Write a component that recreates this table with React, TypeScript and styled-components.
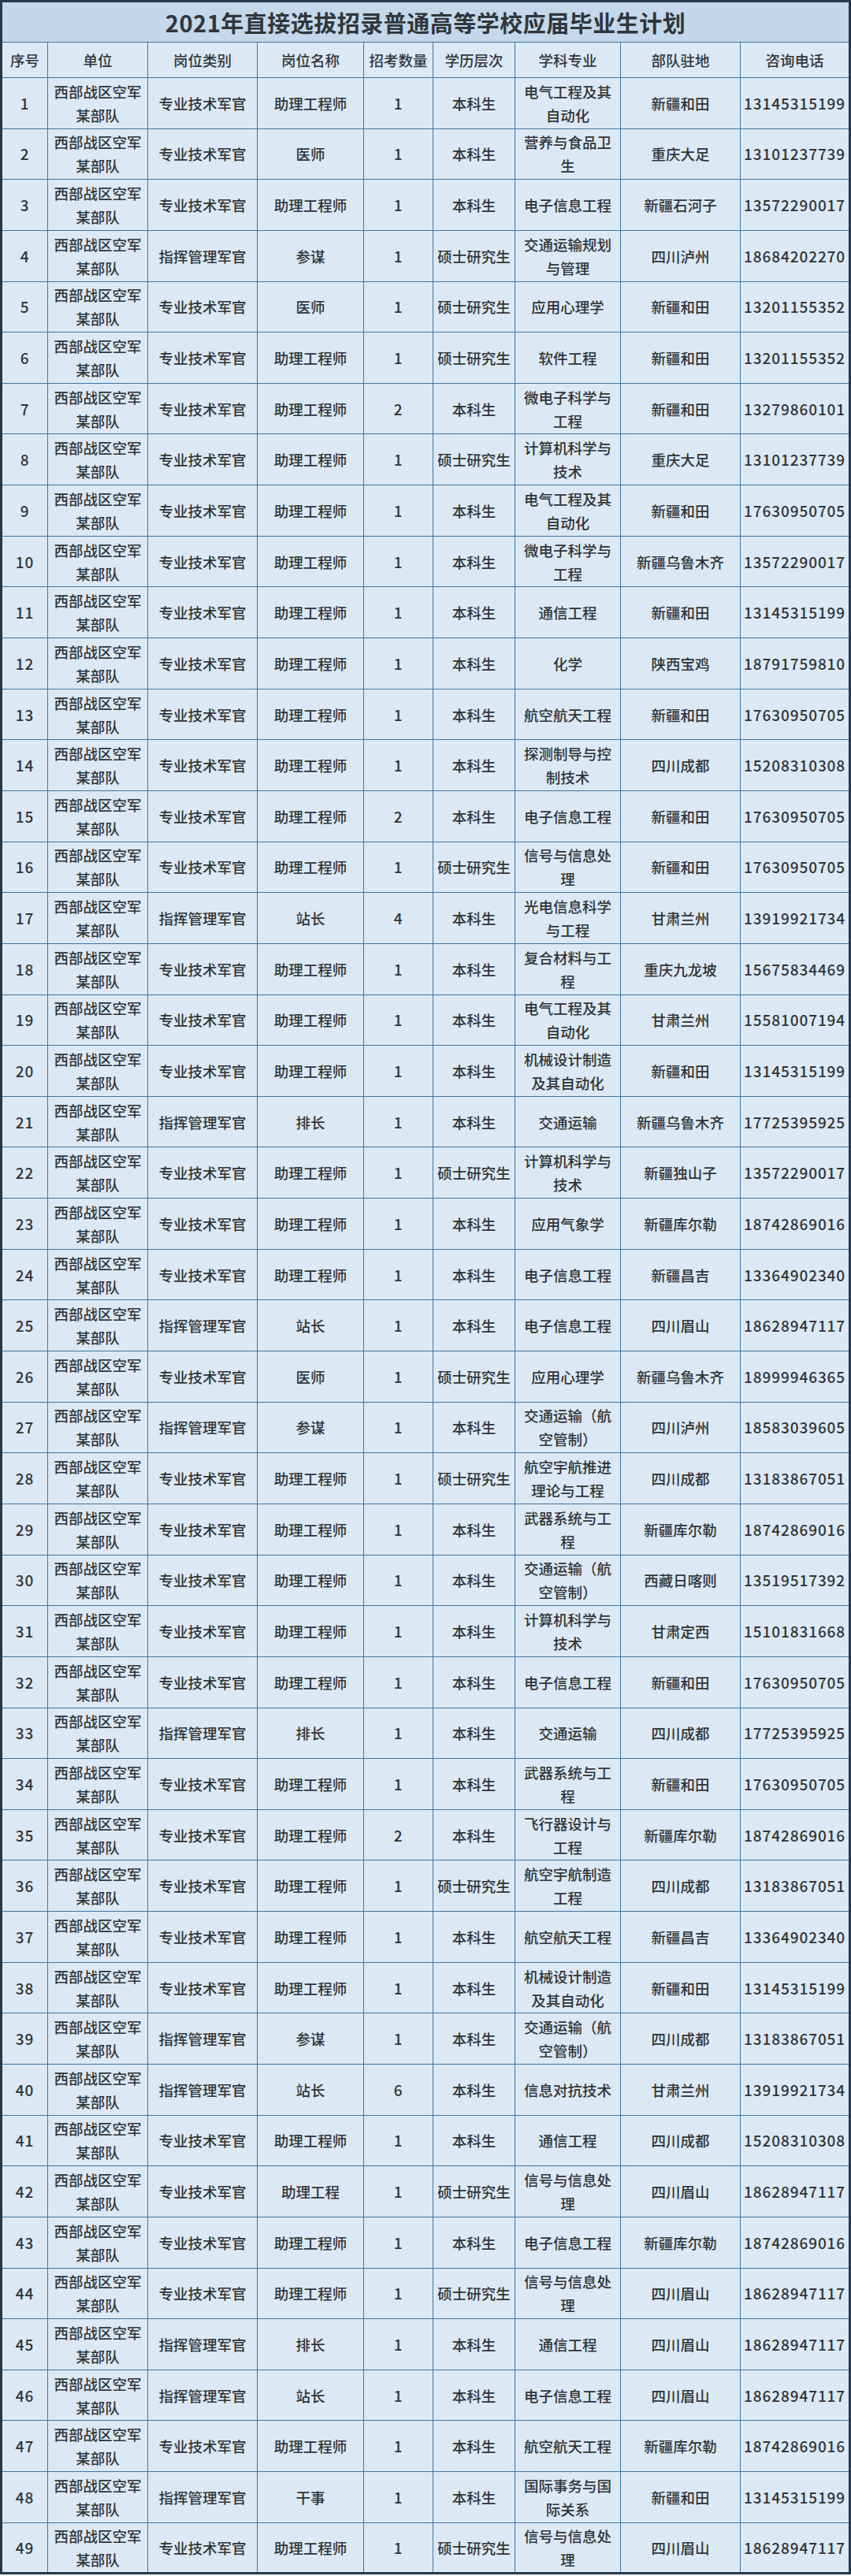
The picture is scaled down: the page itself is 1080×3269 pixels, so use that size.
import React from 'react'
import styled, { createGlobalStyle } from 'styled-components'

const GlobalStyle = createGlobalStyle`
  html, body {
    margin: 0;
    padding: 0;
    background: #ffffff;
  }
  body {
    font-family: "Noto Sans CJK SC", "Noto Sans", sans-serif;
    color: #2f3438;
  }
`

const COLS = [59, 127, 139, 135, 88, 104, 134, 152, 139]
const HEADS = ['序号', '单位', '岗位类别', '岗位名称', '招考数量', '学历层次', '学科专业', '部队驻地', '咨询电话']

const UNIT = '西部战区空军某部队'
const TECH = '专业技术军官'
const CMD = '指挥管理军官'
const BA = '本科生'
const MA = '硕士研究生'

// type, post, count, degree, major, place, phone
const RAW: [string, string, number, string, string, string, string][] = [
  [TECH, '助理工程师', 1, BA, '电气工程及其自动化', '新疆和田', '13145315199'],
  [TECH, '医师', 1, BA, '营养与食品卫生', '重庆大足', '13101237739'],
  [TECH, '助理工程师', 1, BA, '电子信息工程', '新疆石河子', '13572290017'],
  [CMD, '参谋', 1, MA, '交通运输规划与管理', '四川泸州', '18684202270'],
  [TECH, '医师', 1, MA, '应用心理学', '新疆和田', '13201155352'],
  [TECH, '助理工程师', 1, MA, '软件工程', '新疆和田', '13201155352'],
  [TECH, '助理工程师', 2, BA, '微电子科学与工程', '新疆和田', '13279860101'],
  [TECH, '助理工程师', 1, MA, '计算机科学与技术', '重庆大足', '13101237739'],
  [TECH, '助理工程师', 1, BA, '电气工程及其自动化', '新疆和田', '17630950705'],
  [TECH, '助理工程师', 1, BA, '微电子科学与工程', '新疆乌鲁木齐', '13572290017'],
  [TECH, '助理工程师', 1, BA, '通信工程', '新疆和田', '13145315199'],
  [TECH, '助理工程师', 1, BA, '化学', '陕西宝鸡', '18791759810'],
  [TECH, '助理工程师', 1, BA, '航空航天工程', '新疆和田', '17630950705'],
  [TECH, '助理工程师', 1, BA, '探测制导与控制技术', '四川成都', '15208310308'],
  [TECH, '助理工程师', 2, BA, '电子信息工程', '新疆和田', '17630950705'],
  [TECH, '助理工程师', 1, MA, '信号与信息处理', '新疆和田', '17630950705'],
  [CMD, '站长', 4, BA, '光电信息科学与工程', '甘肃兰州', '13919921734'],
  [TECH, '助理工程师', 1, BA, '复合材料与工程', '重庆九龙坡', '15675834469'],
  [TECH, '助理工程师', 1, BA, '电气工程及其自动化', '甘肃兰州', '15581007194'],
  [TECH, '助理工程师', 1, BA, '机械设计制造及其自动化', '新疆和田', '13145315199'],
  [CMD, '排长', 1, BA, '交通运输', '新疆乌鲁木齐', '17725395925'],
  [TECH, '助理工程师', 1, MA, '计算机科学与技术', '新疆独山子', '13572290017'],
  [TECH, '助理工程师', 1, BA, '应用气象学', '新疆库尔勒', '18742869016'],
  [TECH, '助理工程师', 1, BA, '电子信息工程', '新疆昌吉', '13364902340'],
  [CMD, '站长', 1, BA, '电子信息工程', '四川眉山', '18628947117'],
  [TECH, '医师', 1, MA, '应用心理学', '新疆乌鲁木齐', '18999946365'],
  [CMD, '参谋', 1, BA, '交通运输（航空管制）', '四川泸州', '18583039605'],
  [TECH, '助理工程师', 1, MA, '航空宇航推进理论与工程', '四川成都', '13183867051'],
  [TECH, '助理工程师', 1, BA, '武器系统与工程', '新疆库尔勒', '18742869016'],
  [TECH, '助理工程师', 1, BA, '交通运输（航空管制）', '西藏日喀则', '13519517392'],
  [TECH, '助理工程师', 1, BA, '计算机科学与技术', '甘肃定西', '15101831668'],
  [TECH, '助理工程师', 1, BA, '电子信息工程', '新疆和田', '17630950705'],
  [CMD, '排长', 1, BA, '交通运输', '四川成都', '17725395925'],
  [TECH, '助理工程师', 1, BA, '武器系统与工程', '新疆和田', '17630950705'],
  [TECH, '助理工程师', 2, BA, '飞行器设计与工程', '新疆库尔勒', '18742869016'],
  [TECH, '助理工程师', 1, MA, '航空宇航制造工程', '四川成都', '13183867051'],
  [TECH, '助理工程师', 1, BA, '航空航天工程', '新疆昌吉', '13364902340'],
  [TECH, '助理工程师', 1, BA, '机械设计制造及其自动化', '新疆和田', '13145315199'],
  [CMD, '参谋', 1, BA, '交通运输（航空管制）', '四川成都', '13183867051'],
  [CMD, '站长', 6, BA, '信息对抗技术', '甘肃兰州', '13919921734'],
  [TECH, '助理工程师', 1, BA, '通信工程', '四川成都', '15208310308'],
  [TECH, '助理工程', 1, MA, '信号与信息处理', '四川眉山', '18628947117'],
  [TECH, '助理工程师', 1, BA, '电子信息工程', '新疆库尔勒', '18742869016'],
  [TECH, '助理工程师', 1, MA, '信号与信息处理', '四川眉山', '18628947117'],
  [CMD, '排长', 1, BA, '通信工程', '四川眉山', '18628947117'],
  [CMD, '站长', 1, BA, '电子信息工程', '四川眉山', '18628947117'],
  [TECH, '助理工程师', 1, BA, '航空航天工程', '新疆库尔勒', '18742869016'],
  [CMD, '干事', 1, BA, '国际事务与国际关系', '新疆和田', '13145315199'],
  [TECH, '助理工程师', 1, MA, '信号与信息处理', '四川眉山', '18628947117'],
]

const Sheet = styled.table`
  width: 1077px;
  table-layout: fixed;
  border-collapse: collapse;
  border: 3px solid #26394b;
  background: #dce8f3;
  font-size: 18.5px;
  font-weight: 500;
  line-height: 30px;
  text-align: center;
`

const TitleCell = styled.th`
  height: 50px;
  padding: 0;
  background: #c4d8eb;
  border-bottom: 1.5px solid #3e74a3;
  font-size: 29px;
  font-weight: 700;
  letter-spacing: 0.5px;
  color: #30363b;
`

const HeadCell = styled.th`
  height: 44px;
  padding: 0 4px;
  border: 1.5px solid #3e74a3;
  font-weight: 500;
  color: #30363b;
`

const Row = styled.tr`
  height: 64.65px;
`

const Cell = styled.td<{ $digits?: boolean }>`
  padding: 0 4px;
  border: 1.5px solid #3e74a3;
  vertical-align: middle;
  word-break: break-all;
  letter-spacing: ${(p) => (p.$digits ? '0.9px' : '0')};
  font-size: ${(p) => (p.$digits ? '19px' : '18.5px')};
`

export default function App() {
  return (
    <>
      <GlobalStyle />
      <Sheet>
        <colgroup>
          {COLS.map((w, i) => (
            <col key={i} style={{ width: w }} />
          ))}
        </colgroup>
        <thead>
          <tr>
            <TitleCell colSpan={9}>2021年直接选拔招录普通高等学校应届毕业生计划</TitleCell>
          </tr>
          <tr>
            {HEADS.map((h) => (
              <HeadCell key={h}>{h}</HeadCell>
            ))}
          </tr>
        </thead>
        <tbody>
          {RAW.map(([type, post, count, degree, major, place, phone], i) => (
            <Row key={i}>
              <Cell $digits>{i + 1}</Cell>
              <Cell>{UNIT}</Cell>
              <Cell>{type}</Cell>
              <Cell>{post}</Cell>
              <Cell $digits>{count}</Cell>
              <Cell>{degree}</Cell>
              <Cell>{major}</Cell>
              <Cell>{place}</Cell>
              <Cell $digits>{phone}</Cell>
            </Row>
          ))}
        </tbody>
      </Sheet>
    </>
  )
}
